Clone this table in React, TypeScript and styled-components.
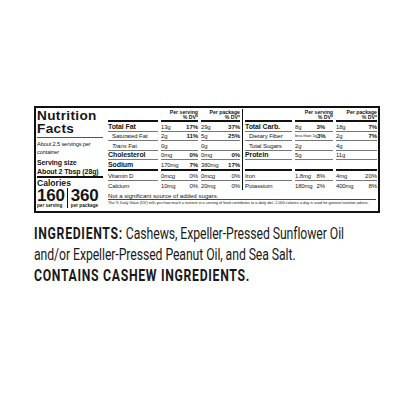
import React from 'react';
import styled, { createGlobalStyle } from 'styled-components';

const Global = createGlobalStyle`
  html, body { margin: 0; padding: 0; background: #fff; overflow: hidden; }
  body { font-family: "Liberation Sans", Arial, sans-serif; color: #161616; }
  * { box-sizing: border-box; }
`;

const Page = styled.div`
  width: 416px;
  height: 416px;
  padding: 106px 36px 0 34px;
  display: flex;
  flex-direction: column;
  gap: 9.5px;
`;

const Label = styled.section`
  width: 346px;
  height: 107px;
  border: 2px solid #111;
  display: flex;
  gap: 5px;
  padding: 1px 1px 0 1px;
`;

const Brand = styled.div`
  width: 66px;
  display: flex;
  flex-direction: column;
`;

const Title = styled.div`
  font-size: 13.6px;
  font-weight: 900;
  line-height: 12.5px;
  letter-spacing: 0.35px;
  padding: 1px 0 2px;
  border-bottom: 1px solid #555;
`;

const Servings = styled.div`
  font-size: 5.7px;
  line-height: 8.5px;
  letter-spacing: -0.15px;
  margin-top: 1.5px;
`;

const ServingSize = styled.div`
  font-size: 7px;
  font-weight: 700;
  line-height: 8.5px;
  letter-spacing: -0.1px;
  margin-top: 2.5px;
  border-bottom: 2.5px solid #111;
`;

const CaloriesLabel = styled.div`
  font-size: 8.6px;
  font-weight: 700;
  line-height: 9px;
  margin-top: 0.5px;
`;

const CalRow = styled.div`
  display: flex;
  align-items: stretch;
`;

const CalCol = styled.div<{ $sep?: boolean }>`
  display: flex;
  flex-direction: column;
  padding: ${p => (p.$sep ? '0 0 0 2.5px' : '0 2.5px 0 0')};
  border-left: ${p => (p.$sep ? '1.2px solid #111' : 'none')};
`;

const CalNum = styled.div`
  font-size: 17px;
  font-weight: 700;
  line-height: 15px;
  letter-spacing: -0.2px;
`;

const CalSub = styled.div`
  font-size: 4.7px;
  font-weight: 700;
  line-height: 5px;
`;

const Right = styled.div`
  flex: 1;
  display: flex;
  flex-direction: column;
`;

const Tables = styled.div`
  display: flex;
  gap: 2px;
`;

const VSep = styled.div`
  width: 1px;
  background: #111;
`;

const Grid = styled.div<{ $cols: string }>`
  width: 132px;
  display: grid;
  grid-template-columns: ${p => p.$cols};
  column-gap: 3px;
  align-content: start;
`;

const Head = styled.div`
  height: 13px;
  border-bottom: 2.5px solid #111;
  font-size: 5.2px;
  font-weight: 700;
  line-height: 5px;
  text-align: right;
  padding-top: 1px;
  white-space: nowrap;
`;

const Cell = styled.div<{ $thick?: boolean; $last?: boolean }>`
  height: ${p => (p.$thick ? '11px' : '9.5px')};
  border-bottom: ${p => (p.$last ? 'none' : p.$thick ? '2.5px solid #111' : '0.8px solid #777')};
  font-size: 5.9px;
  line-height: 8px;
  display: flex;
  align-items: flex-end;
  justify-content: space-between;
  white-space: nowrap;
  letter-spacing: -0.1px;
`;

const Name = styled.span<{ $bold?: boolean; $indent?: boolean }>`
  font-weight: ${p => (p.$bold ? 900 : 400)};
  font-size: ${p => (p.$bold ? '7px' : '6.1px')};
  padding-left: ${p => (p.$indent ? '4px' : '0')};
`;

const Amount = styled.span<{ $small?: boolean }>`
  font-size: ${p => (p.$small ? '4.3px' : 'inherit')};
  letter-spacing: ${p => (p.$small ? '-0.1px' : 'inherit')};
`;

const Pct = styled.span<{ $bold?: boolean; $pad?: number }>`
  font-weight: ${p => (p.$bold ? 700 : 400)};
  font-size: 6.1px;
  padding-right: ${p => p.$pad ?? 0}px;
`;

const Note = styled.div`
  font-size: 6.1px;
  line-height: 7px;
  padding: 1.5px 0 0;
  border-bottom: 0.8px solid #444;
  height: 10px;
  margin-right: 1px;
`;

const Foot = styled.div`
  font-size: 3.85px;
  line-height: 6px;
  white-space: nowrap;
  letter-spacing: -0.03px;
`;

const Ingredients = styled.div`
  width: 445px;
  transform: scaleX(0.765);
  transform-origin: left top;
  font-family: Roboto, "Liberation Sans", sans-serif;
  font-size: 16px;
  line-height: 21px;
  color: #1a1a1a;
  letter-spacing: -0.1px;
`;

const Line = styled.div`
  white-space: nowrap;
`;

const Strong = styled.span`
  font-weight: 700;
  letter-spacing: 0.9px;
`;

type Row = {
  name: React.ReactNode;
  bold?: boolean;
  indent?: boolean;
  s: [string, string];
  p: [string, string];
  pb?: boolean;
  thick?: boolean;
  last?: boolean;
  smallS?: boolean;
};

const left: Row[] = [
  { name: 'Total Fat', bold: true, s: ['13g', '17%'], p: ['29g', '37%'], pb: true },
  { name: 'Saturated Fat', indent: true, s: ['2g', '11%'], p: ['5g', '25%'], pb: true },
  { name: <><i>Trans</i> Fat</>, indent: true, s: ['0g', ''], p: ['0g', ''] },
  { name: 'Cholesterol', bold: true, s: ['0mg', '0%'], p: ['0mg', '0%'], pb: true },
  { name: 'Sodium', bold: true, s: ['170mg', '7%'], p: ['380mg', '17%'], pb: true, thick: true },
  { name: 'Vitamin D', s: ['0mcg', '0%'], p: ['0mcg', '0%'] },
  { name: 'Calcium', s: ['10mg', '0%'], p: ['20mg', '0%'], last: true },
];

const right: Row[] = [
  { name: 'Total Carb.', bold: true, s: ['8g', '3%'], p: ['18g', '7%'], pb: true },
  { name: 'Dietary Fiber', indent: true, s: ['less than 1g', '3%'], p: ['2g', '7%'], pb: true, smallS: true },
  { name: 'Total Sugars', indent: true, s: ['2g', ''], p: ['4g', ''] },
  { name: 'Protein', bold: true, s: ['5g', ''], p: ['11g', ''] },
  { name: '', s: ['', ''], p: ['', ''], thick: true },
  { name: 'Iron', s: ['1.8mg', '8%'], p: ['4mg', '20%'] },
  { name: 'Potassium', s: ['180mg', '2%'], p: ['400mg', '8%'], last: true },
];

function NutrientTable({ rows, cols, sPad }: { rows: Row[]; cols: string; sPad: number }) {
  return (
    <Grid $cols={cols}>
      <Head />
      <Head>Per serving<br />% DV*</Head>
      <Head>Per package<br />% DV*</Head>
      {rows.map((r, i) => (
        <React.Fragment key={i}>
          <Cell $thick={r.thick} $last={r.last}>
            <Name $bold={r.bold} $indent={r.indent}>{r.name}</Name>
          </Cell>
          <Cell $thick={r.thick} $last={r.last}>
            <Amount $small={r.smallS}>{r.s[0]}</Amount>
            <Pct $bold={r.pb} $pad={sPad}>{r.s[1]}</Pct>
          </Cell>
          <Cell $thick={r.thick} $last={r.last}>
            <Amount>{r.p[0]}</Amount>
            <Pct $bold={r.pb}>{r.p[1]}</Pct>
          </Cell>
        </React.Fragment>
      ))}
    </Grid>
  );
}

export default function App() {
  return (
    <>
      <Global />
      <Page>
        <Label>
          <Brand>
            <Title>Nutrition<br />Facts</Title>
            <Servings>About 2.5 servings per<br />container</Servings>
            <ServingSize>Serving size<br />About 2 Tbsp (28g)</ServingSize>
            <CaloriesLabel>Calories</CaloriesLabel>
            <CalRow>
              <CalCol>
                <CalNum>160</CalNum>
                <CalSub>per serving</CalSub>
              </CalCol>
              <CalCol $sep>
                <CalNum>360</CalNum>
                <CalSub>per package</CalSub>
              </CalCol>
            </CalRow>
          </Brand>
          <Right>
            <Tables>
              <NutrientTable rows={left} cols="50px 37px 39px" sPad={0} />
              <VSep />
              <NutrientTable rows={right} cols="47px 38px 41px" sPad={8} />
            </Tables>
            <Note>Not a significant source of added sugars.</Note>
            <Foot>
              The % Daily Value (DV) tells you how much a nutrient in a serving of food contributes to a daily diet. 2,000 calories a day is used for general nutrition advice.
            </Foot>
          </Right>
        </Label>
        <Ingredients>
          <Line><Strong>INGREDIENTS:</Strong> Cashews, Expeller-Pressed Sunflower Oil</Line>
          <Line>and/or Expeller-Pressed Peanut Oil, and Sea Salt.</Line>
          <Line><Strong>CONTAINS CASHEW INGREDIENTS.</Strong></Line>
        </Ingredients>
      </Page>
    </>
  );
}
